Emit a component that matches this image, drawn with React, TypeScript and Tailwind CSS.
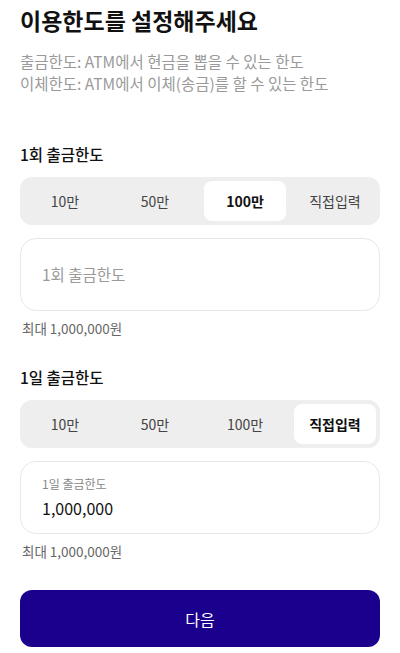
import { useState } from 'react';

const presets = ['10만', '50만', '100만', '직접입력'];

const font = { fontFamily: '"Noto Sans CJK KR", "Noto Sans", sans-serif' };

function Segment({ value, onChange }: { value: number; onChange: (i: number) => void }) {
  return (
    <div className="grid grid-cols-4 rounded-xl bg-[#eeeeee]">
      {presets.map((label, i) => (
        <button key={label} onClick={() => onChange(i)} className="p-1">
          <div
            className={`flex h-10 items-center justify-center rounded-lg text-[14px] ${
              value === i ? 'bg-white font-bold text-[#111111]' : 'text-[#444444]'
            }`}
          >
            {label}
          </div>
        </button>
      ))}
    </div>
  );
}

export default function App() {
  const [once, setOnce] = useState(2);
  const [daily, setDaily] = useState(3);

  return (
    <div style={font} className="flex min-h-[653px] w-[400px] flex-col bg-white px-5 text-[#111111]">
      {/* Header */}
      <h1 className="mt-[3px] text-[23px] font-bold leading-[34px]">이용한도를 설정해주세요</h1>
      <div className="mt-[13px] text-[15.5px] leading-[22px] text-[#9a9a9a]">
        <p>출금한도: ATM에서 현금을 뽑을 수 있는 한도</p>
        <p>이체한도: ATM에서 이체(송금)를 할 수 있는 한도</p>
      </div>

      {/* Per-transaction limit */}
      <h2 className="mt-[49px] text-[15.5px] font-medium leading-[22px]">1회 출금한도</h2>
      <div className="mt-[12px]">
        <Segment value={once} onChange={setOnce} />
      </div>
      <div className="mt-[13px] flex h-[73px] items-center rounded-2xl border border-[#e8e8e8] px-[21px]">
        <span className="text-[15.5px] text-[#9a9a9a]">1회 출금한도</span>
      </div>
      <p className="mt-[7px] pl-[2px] text-[13.5px] leading-[20px] text-[#666666]">최대 1,000,000원</p>

      {/* Daily limit */}
      <h2 className="mt-[28px] text-[15.5px] font-medium leading-[22px]">1일 출금한도</h2>
      <div className="mt-[12px]">
        <Segment value={daily} onChange={setDaily} />
      </div>
      <div className="mt-[13px] flex h-[73px] flex-col justify-center rounded-2xl border border-[#e8e8e8] px-[21px]">
        <span className="text-[12px] leading-[16px] text-[#888888]">1일 출금한도</span>
        <span className="mt-[4px] text-[16px] leading-[24px] text-[#111111]">1,000,000</span>
      </div>
      <p className="mt-[7px] pl-[2px] text-[13.5px] leading-[20px] text-[#666666]">최대 1,000,000원</p>

      <button className="mt-[29px] h-[57px] w-full rounded-xl bg-[#1a008c] text-[16px] text-white">다음</button>
    </div>
  );
}
